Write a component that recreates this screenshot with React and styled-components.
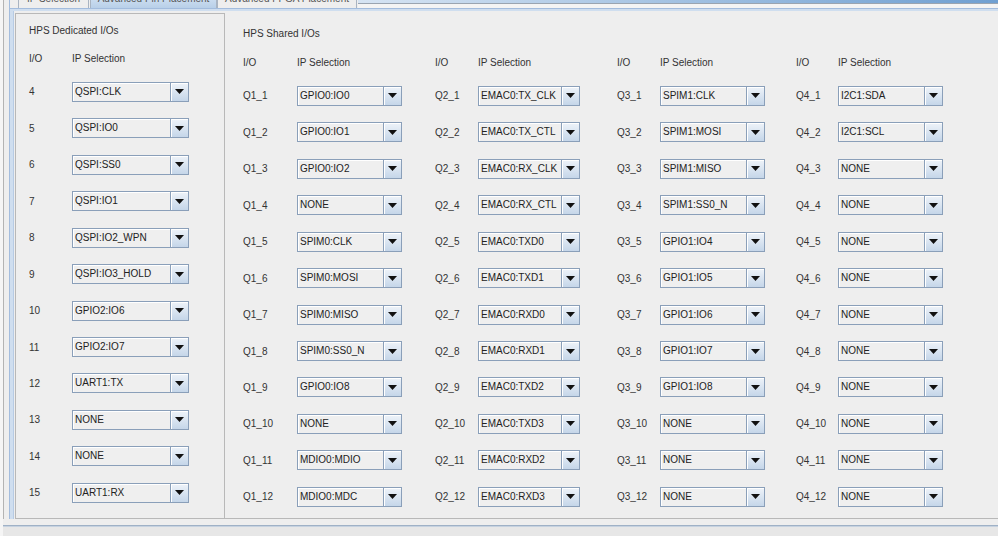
import React from "react";
import styled, { createGlobalStyle } from "styled-components";

const GlobalStyle = createGlobalStyle`
  html, body {
    margin: 0;
    padding: 0;
    background: #eeeeee;
  }
  body {
    font-family: "Liberation Sans", Arial, sans-serif;
  }
`;

const Screen = styled.div`
  width: 998px;
  height: 536px;
  overflow: hidden;
  box-sizing: border-box;
  background: #eeeeee;
  border-left: 3px solid #f5f5f5;
  display: flex;
  flex-direction: column;
  font-family: "Liberation Sans", Arial, sans-serif;
  font-size: 10px;
  color: #333333;
`;

const Frame = styled.div`
  height: 519px;
  border-left: 1px solid #b3b3b3;
  padding-left: 5px;
  display: flex;
  flex-direction: column;
`;

const TabStrip = styled.div`
  height: 8px;
  display: flex;
  overflow: hidden;
  padding-left: 8px;
  border-left: 1px solid #a3bcdd;
`;

const Tab = styled.div`
  width: ${(p) => p.$w}px;
  box-sizing: border-box;
  margin-right: ${(p) => (p.$selected ? 0 : 1)}px;
  border-left: 1px solid #a9b4c2;
  border-right: 1px solid #a9b4c2;
  background: ${(p) =>
    p.$selected ? "linear-gradient(#c9dbef, #b8cfe8)" : "#eeeeee"};
  text-align: center;
  overflow: hidden;
  span {
    display: block;
    line-height: 10px;
    margin-top: -6px;
    white-space: nowrap;
    color: #555555;
  }
`;

const TabFiller = styled.div`
  flex: 1;
  background: linear-gradient(90deg, #d6e4f3, #6f9fd1) top / 100% 3px no-repeat,
    linear-gradient(#9aa4b0, #9aa4b0) 0 3px / 100% 1px no-repeat, #f4f4f4;
`;

const TabContent = styled.div`
  flex: 1;
  border-top: 1px solid #a3bcdd;
  border-left: 1px solid #a3bcdd;
  display: flex;
`;

const TabBand = styled.div`
  flex: 1;
  border-top: 2px solid #cfdeef;
  border-left: 3px solid #cfdeef;
  display: flex;
`;

const TabInner = styled.div`
  flex: 1;
  border-left: 1px solid #b7cbe4;
  padding: 2px 0 0 1px;
  display: flex;
`;

const LeftPanel = styled.section`
  width: 210px;
  height: 506px;
  box-sizing: border-box;
  border: 1px solid #b8b8b8;
  padding: 11px 0 0 13px;
  display: flex;
  flex-direction: column;
`;

const RightPanel = styled.section`
  flex: 1;
  height: 506px;
  box-sizing: border-box;
  border-bottom: 1px solid #b8b8b8;
  padding: 15px 0 0 18px;
  display: flex;
  flex-direction: column;
`;

const Title = styled.div`
  line-height: 12px;
  height: 12px;
  white-space: nowrap;
`;

const Columns = styled.div`
  display: flex;
`;

const Column = styled.div`
  width: ${(p) => p.$w}px;
  flex: none;
  display: flex;
  flex-direction: column;
`;

const HeaderRow = styled.div`
  display: flex;
  line-height: 12px;
  margin-top: ${(p) => p.$top}px;
  margin-bottom: 8.78px;
  white-space: nowrap;
`;

const Label = styled.div`
  width: ${(p) => p.$w}px;
  flex: none;
  white-space: nowrap;
`;

const Row = styled.div`
  height: 36.45px;
  display: flex;
  align-items: center;
`;

const ComboBox = styled.div`
  width: ${(p) => p.$w}px;
  height: 20px;
  box-sizing: border-box;
  flex: none;
  border: 1px solid #8a9fb9;
  background: #efefef;
  display: flex;
`;

const ComboValue = styled.div`
  flex: 1;
  min-width: 0;
  padding-left: 2px;
  line-height: 18px;
  color: #222222;
  white-space: nowrap;
  overflow: hidden;
  box-shadow: inset 1px 1px 0 #ffffff;
`;

const ComboArrow = styled.div`
  width: 17px;
  flex: none;
  border-left: 1px solid #8a9fb9;
  background: linear-gradient(#eef3f9, #c5d6e9);
  box-shadow: inset 1px 1px 0 #ffffff;
  display: flex;
  align-items: center;
  justify-content: center;
`;

const BottomBar = styled.div`
  flex: 1;
  margin-top: 6px;
  border-top: 1px solid #9fb1c6;
  box-shadow: inset 0 1px 0 #c6d2e0;
  background: #e7e7e7;
`;

const Combo = ({ value, width }) => (
  <ComboBox $w={width}>
    <ComboValue>{value}</ComboValue>
    <ComboArrow>
      <svg width="9" height="5" viewBox="0 0 9 5">
        <polygon points="0,0 9,0 4.5,5" fill="#111111" />
      </svg>
    </ComboArrow>
  </ComboBox>
);

const dedicated = [
  ["4", "QSPI:CLK"],
  ["5", "QSPI:IO0"],
  ["6", "QSPI:SS0"],
  ["7", "QSPI:IO1"],
  ["8", "QSPI:IO2_WPN"],
  ["9", "QSPI:IO3_HOLD"],
  ["10", "GPIO2:IO6"],
  ["11", "GPIO2:IO7"],
  ["12", "UART1:TX"],
  ["13", "NONE"],
  ["14", "NONE"],
  ["15", "UART1:RX"],
];

const quadrants = [
  {
    q: "Q1",
    width: 192,
    label: 54,
    combo: 105,
    values: [
      "GPIO0:IO0",
      "GPIO0:IO1",
      "GPIO0:IO2",
      "NONE",
      "SPIM0:CLK",
      "SPIM0:MOSI",
      "SPIM0:MISO",
      "SPIM0:SS0_N",
      "GPIO0:IO8",
      "NONE",
      "MDIO0:MDIO",
      "MDIO0:MDC",
    ],
  },
  {
    q: "Q2",
    width: 182,
    label: 43,
    combo: 102,
    values: [
      "EMAC0:TX_CLK",
      "EMAC0:TX_CTL",
      "EMAC0:RX_CLK",
      "EMAC0:RX_CTL",
      "EMAC0:TXD0",
      "EMAC0:TXD1",
      "EMAC0:RXD0",
      "EMAC0:RXD1",
      "EMAC0:TXD2",
      "EMAC0:TXD3",
      "EMAC0:RXD2",
      "EMAC0:RXD3",
    ],
  },
  {
    q: "Q3",
    width: 179,
    label: 43,
    combo: 105,
    values: [
      "SPIM1:CLK",
      "SPIM1:MOSI",
      "SPIM1:MISO",
      "SPIM1:SS0_N",
      "GPIO1:IO4",
      "GPIO1:IO5",
      "GPIO1:IO6",
      "GPIO1:IO7",
      "GPIO1:IO8",
      "NONE",
      "NONE",
      "NONE",
    ],
  },
  {
    q: "Q4",
    width: 180,
    label: 42,
    combo: 105,
    values: [
      "I2C1:SDA",
      "I2C1:SCL",
      "NONE",
      "NONE",
      "NONE",
      "NONE",
      "NONE",
      "NONE",
      "NONE",
      "NONE",
      "NONE",
      "NONE",
    ],
  },
];

export default function App() {
  return (
    <>
      <GlobalStyle />
      <Screen>
        <Frame>
          <TabStrip>
            <Tab $w={71}>
              <span>IP Selection</span>
            </Tab>
            <Tab $w={127} $selected>
              <span>Advanced Pin Placement</span>
            </Tab>
            <Tab $w={140}>
              <span>Advanced FPGA Placement</span>
            </Tab>
            <TabFiller />
          </TabStrip>
          <TabContent>
            <TabBand>
              <TabInner>
                <LeftPanel>
                  <Title>HPS Dedicated I/Os</Title>
                  <HeaderRow $top={16}>
                    <Label $w={43}>I/O</Label>
                    <span>IP Selection</span>
                  </HeaderRow>
                  {dedicated.map(([io, value]) => (
                    <Row key={io}>
                      <Label $w={43}>{io}</Label>
                      <Combo value={value} width={117} />
                    </Row>
                  ))}
                </LeftPanel>
                <RightPanel>
                  <Title>HPS Shared I/Os</Title>
                  <Columns>
                    {quadrants.map((col) => (
                      <Column key={col.q} $w={col.width}>
                        <HeaderRow $top={17}>
                          <Label $w={col.label}>I/O</Label>
                          <span>IP Selection</span>
                        </HeaderRow>
                        {col.values.map((value, i) => (
                          <Row key={i}>
                            <Label $w={col.label}>{`${col.q}_${i + 1}`}</Label>
                            <Combo value={value} width={col.combo} />
                          </Row>
                        ))}
                      </Column>
                    ))}
                  </Columns>
                </RightPanel>
              </TabInner>
            </TabBand>
          </TabContent>
        </Frame>
        <BottomBar />
      </Screen>
    </>
  );
}
